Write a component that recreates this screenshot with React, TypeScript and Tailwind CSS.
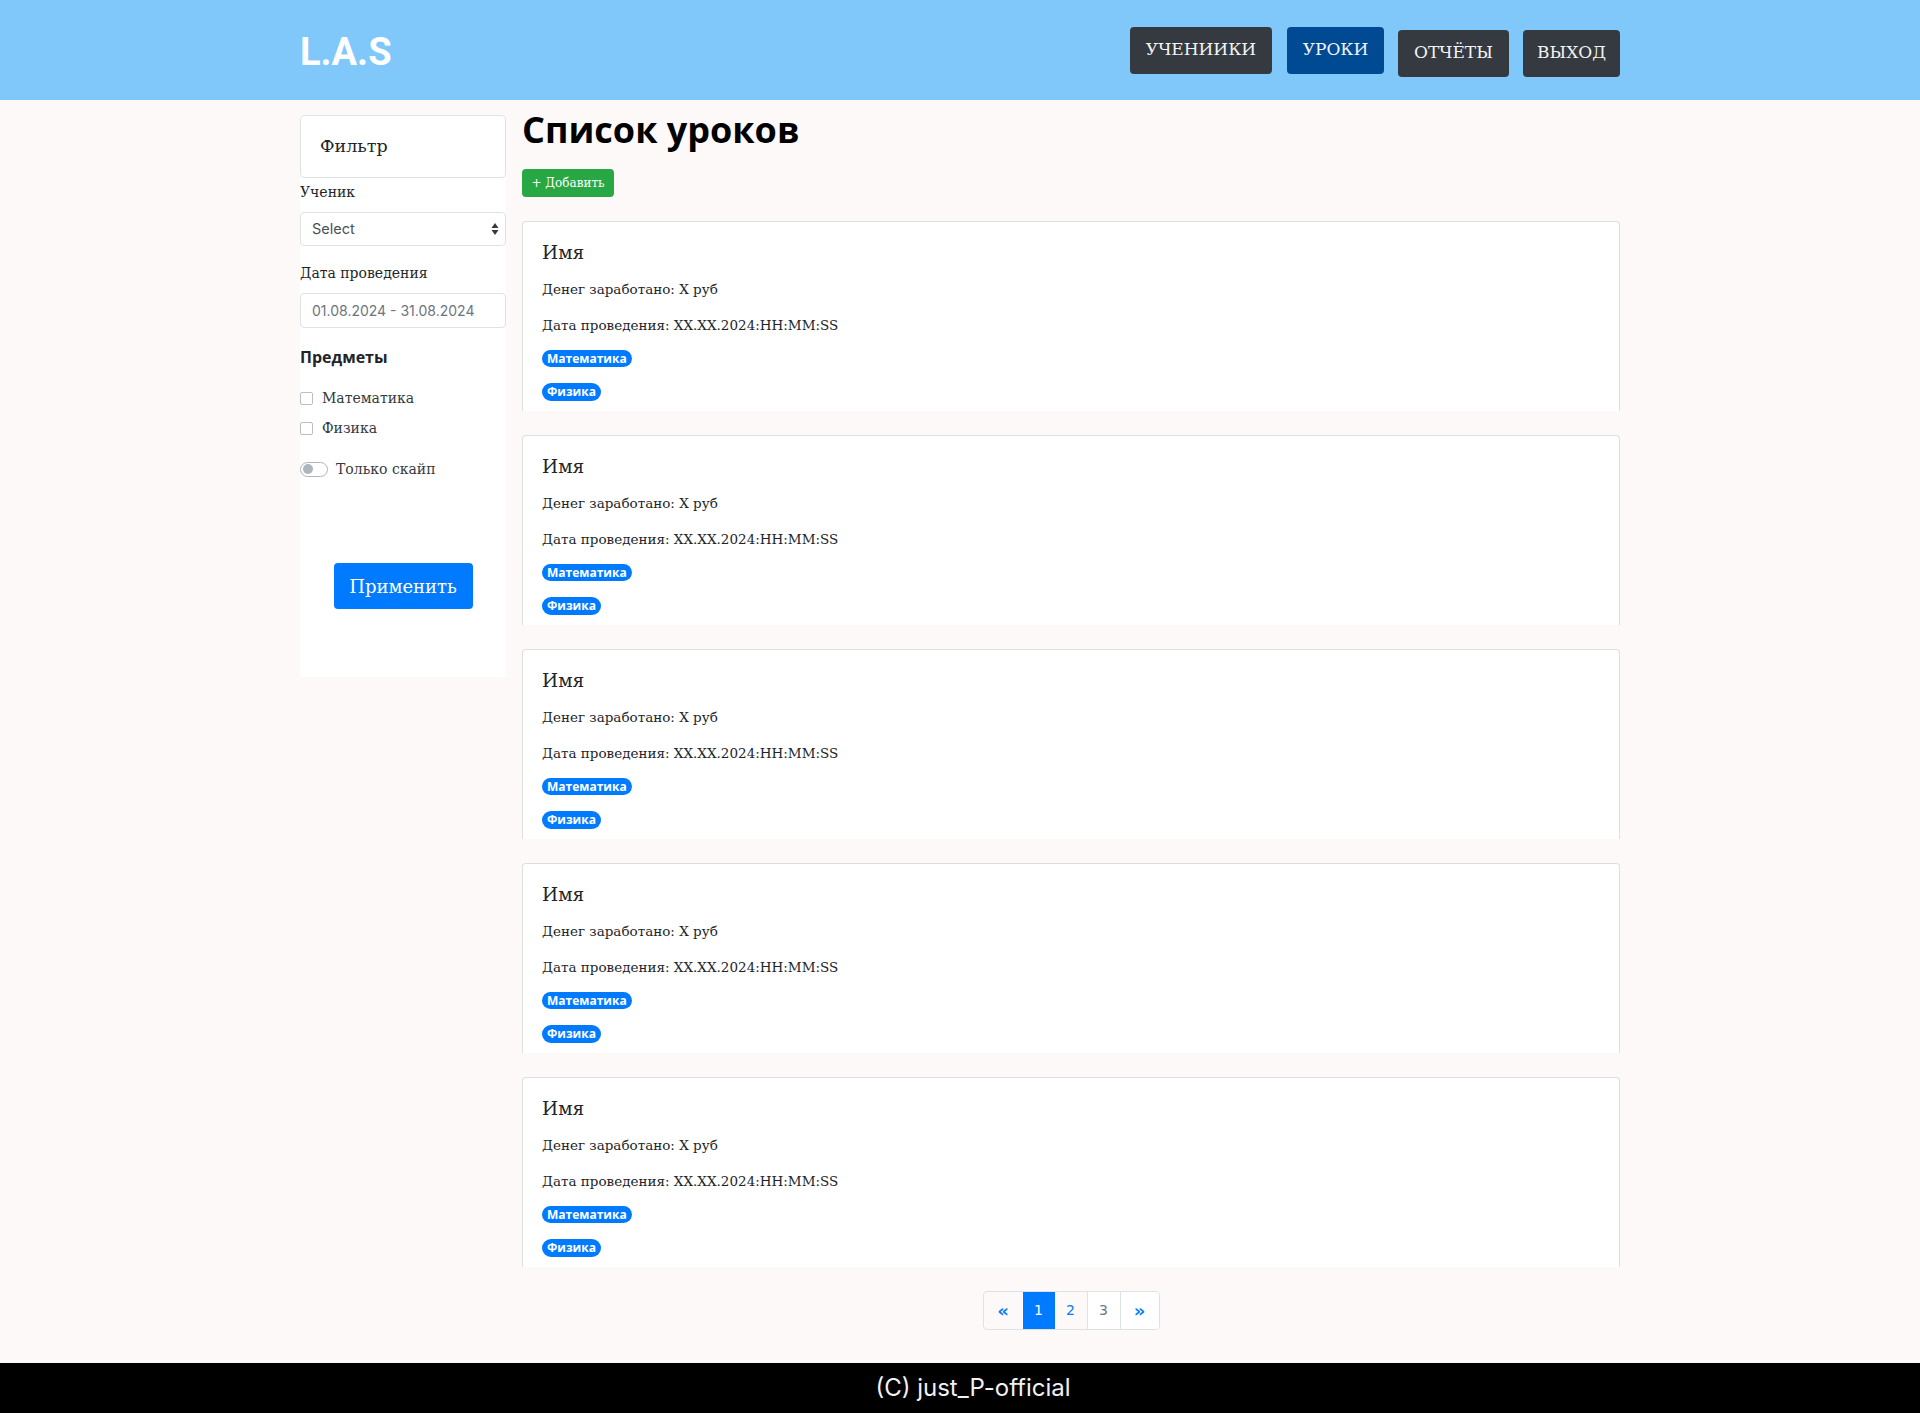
import React from "react";

const serif = "font-['DejaVu_Serif',serif]";
const sans = "font-['Open_Sans',sans-serif]";

function Card() {
  return (
    <div className="h-[190px] overflow-hidden rounded-t-[4px] border border-b-0 border-[#dfdfdf] bg-white pl-[19px] pt-[19px]">
      <div className={`${serif} h-[24px] text-[18.5px] leading-[24px] text-[#212529]`}>Имя</div>
      <div className={`${serif} mt-[12px] h-[24px] text-[13.5px] leading-[24px] text-[#212529]`}>
        Денег заработано: X руб
      </div>
      <div className={`${serif} mt-[12px] h-[24px] text-[13.5px] leading-[24px] text-[#212529]`}>
        Дата проведения: XX.XX.2024:HH:MM:SS
      </div>
      <div className="mt-[13px] flex">
        <span className={`${sans} flex h-[17px] items-center rounded-full bg-[#007bff] px-[5px] text-[12px] font-bold text-white`}>
          Математика
        </span>
      </div>
      <div className="mt-[16px] flex">
        <span className={`${sans} flex h-[18px] items-center rounded-full bg-[#007bff] px-[5px] text-[12px] font-bold text-white`}>
          Физика
        </span>
      </div>
    </div>
  );
}

export default function App() {
  const navBtn = `${serif} flex h-[47px] items-center justify-center rounded-[4px] text-[17px] uppercase text-[#f1f3f5]`;
  return (
    <div className="flex min-h-screen flex-col bg-[#fdf9f8]">
      {/* шапка */}
      <header className="h-[100px] bg-[#80c7fa]">
        <div className="mx-auto flex h-full w-[1320px] items-center justify-between">
          <div className="mt-[4px] font-['Roboto',sans-serif] text-[38px] font-bold text-white">L.A.S</div>
          <nav className="flex items-center gap-[14px]">
            <button className={`${navBtn} w-[142px] bg-[#343a40]`}>Учениики</button>
            <button className={`${navBtn} ml-px w-[97px] bg-[#004a93]`}>Уроки</button>
            <button className={`${navBtn} mt-[6px] w-[111px] bg-[#343a40]`}>Отчёты</button>
            <button className={`${navBtn} mt-[6px] w-[97px] bg-[#343a40]`}>Выход</button>
          </nav>
        </div>
      </header>

      <main className="mx-auto flex w-[1320px] gap-[16px]">
        {/* фильтр */}
        <aside className="mt-[15px] flex h-[562px] w-[206px] shrink-0 flex-col bg-white pb-[68px]">
          <div className={`${serif} flex h-[63px] items-center rounded-[4px] border border-[#dee2e6] px-[19px] text-[17.5px] text-[#212529]`}>
            Фильтр
          </div>
          <div className={`${serif} mt-[3px] h-[22px] text-[14px] leading-[22px] text-[#212529]`}>Ученик</div>
          <div className="mt-[9px] flex h-[34px] items-center justify-between rounded-[4px] border border-[#dee2e6] bg-white pl-[11px] pr-[6px]">
            <span className="font-['Inter',sans-serif] text-[14.5px] text-[#495057]">Select</span>
            <svg width="8" height="14" viewBox="0 0 8 14">
              <path d="M4 1 L7.5 6 L0.5 6 Z" fill="#343a40" />
              <path d="M4 13 L7.5 8 L0.5 8 Z" fill="#343a40" />
            </svg>
          </div>
          <div className={`${serif} mt-[16px] h-[22px] text-[14px] leading-[22px] text-[#212529]`}>Дата проведения</div>
          <div className="mt-[9px] flex h-[35px] items-center rounded-[4px] border border-[#dee2e6] bg-white pl-[11px]">
            <span className="font-['Inter',sans-serif] text-[14px] text-[#6c757d]">01.08.2024 - 31.08.2024</span>
          </div>
          <div className={`${sans} mt-[17px] h-[24px] text-[16px] font-bold leading-[24px] text-[#212529]`}>Предметы</div>
          <div className="mt-[17px] flex flex-col gap-[6px]">
            {["Математика", "Физика"].map((s) => (
              <label key={s} className="flex h-[24px] items-center gap-[9px]">
                <span className="h-[13px] w-[13px] rounded-[2px] border border-[#b9bec4] bg-white" />
                <span className={`${serif} text-[14px] text-[#343a40]`}>{s}</span>
              </label>
            ))}
          </div>
          <div className="mt-[17px] flex h-[24px] items-center gap-[8px]">
            <span className="flex h-[15px] w-[28px] items-center rounded-full border border-[#adb5bd] bg-white px-[2px]">
              <span className="h-[10px] w-[10px] rounded-full bg-[#adb5bd]" />
            </span>
            <span className={`${serif} text-[14px] text-[#343a40]`}>Только скайп</span>
          </div>
          <div className="mt-auto flex justify-center">
            <button className={`${serif} h-[46px] w-[139px] rounded-[4px] bg-[#007bff] text-[18px] text-white`}>
              Применить
            </button>
          </div>
        </aside>

        {/* список */}
        <section className="flex min-w-0 flex-1 flex-col pt-[8px]">
          <h1 className={`${sans} h-[43px] text-[36px] font-bold leading-[43px] text-black`}>Список уроков</h1>
          <div className="mt-[18px] flex">
            <button className={`${serif} h-[28px] w-[92px] rounded-[4px] bg-[#28a745] text-[12px] text-white`}>
              + Добавить
            </button>
          </div>
          <div className="mt-[24px] flex flex-col gap-[24px]">
            {[1, 2, 3, 4, 5].map((i) => (
              <Card key={i} />
            ))}
          </div>
          <div className="mb-[33px] mt-[24px] flex justify-center">
            <div className="flex h-[39px] overflow-hidden rounded-[4px] border border-[#dee2e6] font-['DejaVu_Sans',sans-serif] text-[14px]">
              <span className="flex w-[39px] items-center justify-center text-[18px] font-bold text-[#007bff]">«</span>
              <span className="flex w-[32px] items-center justify-center bg-[#007bff] text-white">1</span>
              <span className="flex w-[33px] items-center justify-center border-r border-[#dee2e6] text-[#007bff]">2</span>
              <span className="flex w-[33px] items-center justify-center border-r border-[#dee2e6] bg-white text-[#6c757d]">3</span>
              <span className="flex w-[38px] items-center justify-center bg-white text-[18px] font-bold text-[#007bff]">»</span>
            </div>
          </div>
        </section>
      </main>

      <footer className="mt-auto flex h-[50px] items-center justify-center bg-black pl-[26px] font-['Inter',sans-serif] text-[24px] text-[#f1f1f1]">
        (C) just_P-official
      </footer>
    </div>
  );
}
